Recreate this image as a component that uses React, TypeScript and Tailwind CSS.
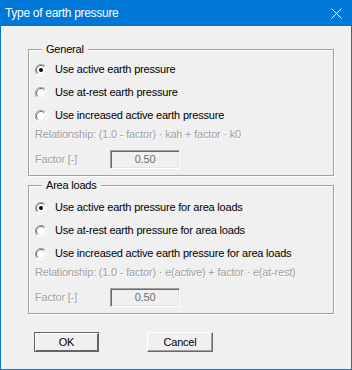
import React from 'react';

const sans = "font-['Liberation_Sans',Arial,sans-serif]";

function Radio({ checked }: { checked?: boolean }) {
  return (
    <svg width="12" height="12" viewBox="0 0 12 12" className="shrink-0">
      <circle cx="6" cy="6" r="5.5" fill="#fff" />
      <path d="M10 2 A5.5 5.5 0 0 0 2 10" fill="none" stroke="#a0a0a0" strokeWidth="1" />
      <path d="M9.2 2.8 A4.5 4.5 0 0 0 2.8 9.2" fill="none" stroke="#696969" strokeWidth="1" />
      <path d="M2 10 A5.5 5.5 0 0 0 10 2" fill="none" stroke="#fff" strokeWidth="1" />
      <path d="M2.8 9.2 A4.5 4.5 0 0 0 9.2 2.8" fill="none" stroke="#e3e3e3" strokeWidth="1" />
      {checked && <circle cx="6" cy="6" r="2" fill="#000" />}
    </svg>
  );
}

function Option({ label, checked }: { label: string; checked?: boolean }) {
  return (
    <div className="flex h-[23px] items-center gap-[8px]">
      <Radio checked={checked} />
      <span className="text-[11px] leading-[13px] text-black">{label}</span>
    </div>
  );
}

function Group({
  title,
  options,
  relation,
  topGap,
}: {
  title: string;
  options: string[];
  relation: string;
  topGap: string;
}) {
  return (
    <div className="flex flex-col border border-[#a0a0a0] pl-[6px] shadow-[inset_1px_1px_0_#fff,1px_1px_0_#fff]">
      <span className="-mt-[7px] ml-[7px] self-start bg-[#f0f0f0] px-[4px] text-[11px] leading-[13px] text-black">
        {title}
      </span>
      <div className={`flex flex-col ${topGap}`}>
        {options.map((o, i) => (
          <Option key={o} label={o} checked={i === 0} />
        ))}
      </div>
      <div className="flex h-[14px] items-center text-[11px] leading-[13px] text-[#a0a0a0] [text-shadow:1px_1px_0_#fff]">
        {relation}
      </div>
      <div className="mt-[9px] mb-[6px] flex items-center">
        <span className="w-[75px] text-[11px] leading-[13px] text-[#a0a0a0] [text-shadow:1px_1px_0_#fff]">
          Factor [-]
        </span>
        <div className="flex h-[19px] w-[70px] items-center justify-center border border-t-[#a0a0a0] border-l-[#a0a0a0] border-b-white border-r-white bg-[#f0f0f0] text-[11px] text-[#6d6d6d] shadow-[inset_1px_1px_0_#696969,inset_-1px_-1px_0_#e3e3e3]">
          0.50
        </div>
      </div>
    </div>
  );
}

export default function App() {
  return (
    <div className={`${sans} flex h-[370px] w-[352px] flex-col overflow-hidden border-x border-b border-[#0078d7] bg-[#f0f0f0]`}>
      {/* Title bar */}
      <div className="-mx-px flex h-[26px] shrink-0 items-center justify-between bg-[#0078d7] pl-[5px] pr-[10px]">
        <span className="text-[12px] tracking-[-0.3px] text-white">Type of earth pressure</span>
        <svg width="11" height="11" viewBox="0 0 11 11">
          <path d="M0.5 0.5 L10.5 10.5 M10.5 0.5 L0.5 10.5" stroke="#fff" strokeWidth="1" />
        </svg>
      </div>

      <div className="flex flex-col pl-[27px] pr-[17px] pt-[23px] tracking-[-0.2px]">
        <Group
          title="General"
          topGap="mt-[2px]"
          options={[
            'Use active earth pressure',
            'Use at-rest earth pressure',
            'Use increased active earth pressure',
          ]}
          relation="Relationship: (1.0 - factor) · kah + factor · k0"
        />
        <div className="h-[9px]" />
        <Group
          title="Area loads"
          topGap="mt-[4px]"
          options={[
            'Use active earth pressure for area loads',
            'Use at-rest earth pressure for area loads',
            'Use increased active earth pressure for area loads',
          ]}
          relation="Relationship: (1.0 - factor) · e(active) + factor · e(at-rest)"
        />

        {/* Buttons */}
        <div className="mt-[18px] flex gap-[48px] pl-[6px]">
          <button className="flex h-[20px] w-[65px] items-center justify-center border border-[#646464] bg-[#f0f0f0] text-[11px] text-black shadow-[inset_1px_1px_0_#fff,inset_-1px_-1px_0_#646464]">
            OK
          </button>
          <button className="flex h-[20px] w-[66px] items-center justify-center border border-t-white border-l-white border-b-[#696969] border-r-[#696969] bg-[#f0f0f0] text-[11px] text-black shadow-[inset_-1px_-1px_0_#a0a0a0]">
            Cancel
          </button>
        </div>
      </div>
    </div>
  );
}
